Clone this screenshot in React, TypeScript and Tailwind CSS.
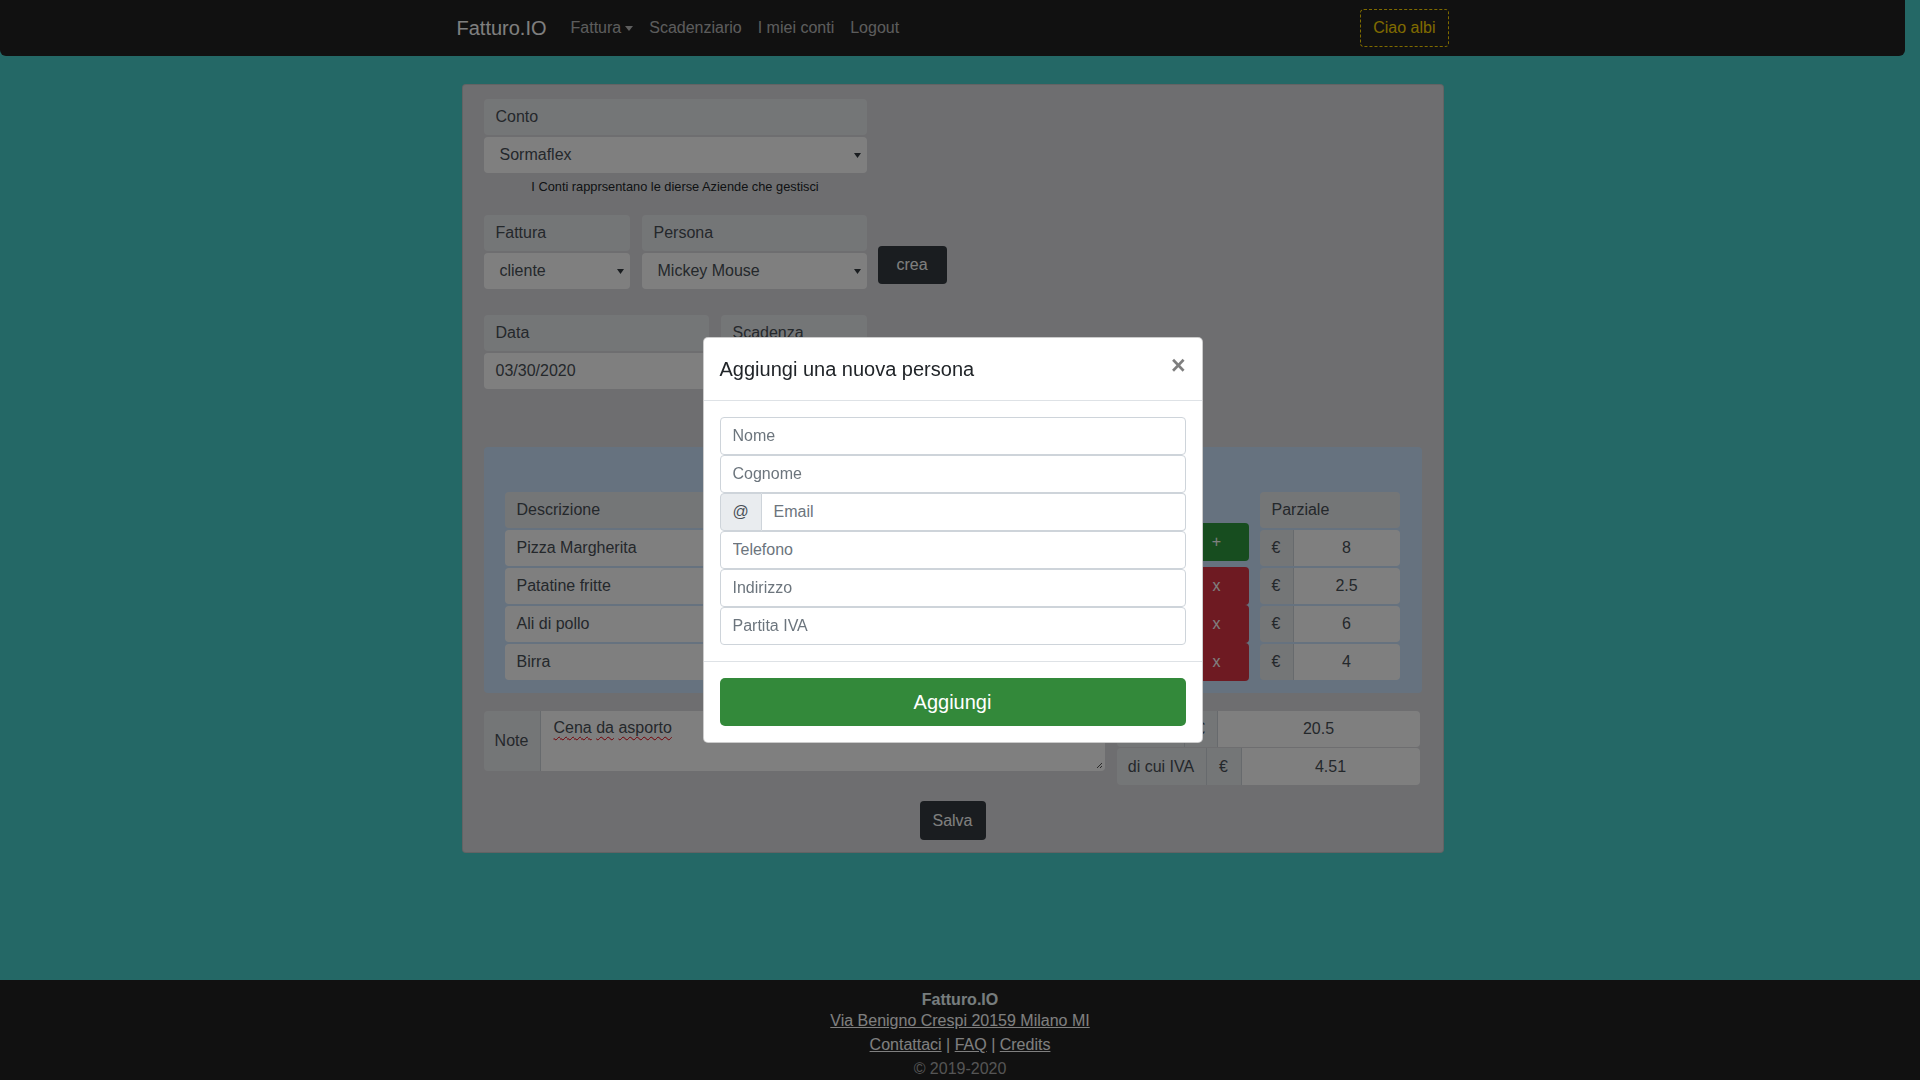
import React from 'react';

const rows = [
  { desc: 'Pizza Margherita', qty: '2', price: '4', iva: '22', parz: '8' },
  { desc: 'Patatine fritte', qty: '1', price: '2.5', iva: '22', parz: '2.5' },
  { desc: 'Ali di pollo', qty: '1', price: '6', iva: '22', parz: '6' },
  { desc: 'Birra', qty: '2', price: '2', iva: '22', parz: '4' },
];

const Caret: React.FC = () => (
  <svg width="7" height="5" viewBox="0 0 7 5" className="shrink-0">
    <path d="M0 0h7L3.5 5z" fill="#343a40" />
  </svg>
);

const Label: React.FC<{ children: React.ReactNode; className?: string }> = ({ children, className = '' }) => (
  <div className={`h-[36px] flex items-center px-3 bg-[#e9ecef] text-[#495057] rounded-[4px] ${className}`}>
    {children}
  </div>
);

const Select: React.FC<{ value: string }> = ({ value }) => (
  <div className="h-[36px] flex items-center justify-between pl-4 pr-[6px] bg-white text-[#495057] rounded-[4px]">
    <span>{value}</span>
    <Caret />
  </div>
);

const Field: React.FC<{ label: string; children: React.ReactNode; className?: string }> = ({ label, children, className = '' }) => (
  <div className={`flex flex-col gap-[2px] ${className}`}>
    <Label>{label}</Label>
    {children}
  </div>
);

const Euro: React.FC<{ value: string }> = ({ value }) => (
  <div className="h-[36px] flex rounded-[4px] overflow-hidden">
    <div className="w-[34px] flex items-center justify-center bg-[#e9ecef] text-[#495057] border-r border-[#ced4da]">€</div>
    <div className="flex-1 flex items-center justify-center bg-white text-[#495057]">{value}</div>
  </div>
);

const inputCls = 'h-[38px] w-full min-w-0 border border-[#ced4da] rounded-[4px] px-3 text-[16px] text-[#495057] placeholder:text-[#6c757d] bg-white outline-none';

export default function App() {
  return (
    <div className="h-screen flex flex-col bg-[#48d1cc] text-[16px] overflow-hidden" style={{ fontFamily: '"Liberation Sans", Arial, sans-serif' }}>
      <div className="w-[1905px]">
        {/* Navbar */}
        <nav className="h-[56px] bg-[#222] rounded-b-[6px] flex items-center">
          <div className="w-[992px] mx-auto flex items-center justify-between">
            <div className="flex items-center">
              <span className="text-[20px] text-white mr-[16px]">Fatturo.IO</span>
              <div className="flex items-center text-white/70">
                <span className="px-2 flex items-center gap-[4px]">
                  Fattura
                  <span className="inline-block border-t-[5px] border-t-current border-x-[4px] border-x-transparent" />
                </span>
                <span className="px-2">Scadenziario</span>
                <span className="px-2">I miei conti</span>
                <span className="px-2">Logout</span>
              </div>
            </div>
            <button className="h-[38px] px-3 border border-dashed border-[#ffd700] text-[#ffd700] rounded-[4px]">Ciao albi</button>
          </div>
        </nav>

        {/* Card */}
        <div className="w-[982px] mx-auto mt-[28px] bg-[#dcdde0] border border-black/10 rounded-[4px] px-[21px] pt-[14px] pb-[12px]">
          <div className="w-[383px]">
            <Field label="Conto">
              <Select value="Sormaflex" />
            </Field>
            <p className="text-[12.8px] leading-[18px] text-[#212529] text-center mt-[5px]">I Conti rapprsentano le dierse Aziende che gestisci</p>
          </div>

          <div className="flex items-end mt-[19px]">
            <Field label="Fattura" className="w-[146px]">
              <Select value="cliente" />
            </Field>
            <Field label="Persona" className="w-[225px] ml-[12px]">
              <Select value="Mickey Mouse" />
            </Field>
            <button className="ml-[11px] mb-[5px] h-[38px] w-[69px] bg-[#343a40] text-white rounded-[4px]">crea</button>
          </div>

          <div className="flex mt-[26px]">
            <Field label="Data" className="w-[225px]">
              <div className="h-[36px] flex items-center px-3 bg-white text-[#495057] rounded-[4px]">03/30/2020</div>
            </Field>
            <Field label="Scadenza" className="w-[146px] ml-[12px]">
              <div className="h-[36px] flex items-center px-3 bg-white text-[#495057] rounded-[4px]">04/30/2020</div>
            </Field>
          </div>

          {/* Invoice rows */}
          <div className="mt-[58px] bg-[#cce5ff] rounded-[4px] pl-[21px] pr-[22px] pt-[45px] pb-[12px] flex">
            <div className="w-[295px] flex flex-col gap-[2px]">
              <Label>Descrizione</Label>
              {rows.map((r) => (
                <div key={r.desc} className="h-[36px] flex items-center px-3 bg-white text-[#495057] rounded-[4px]">{r.desc}</div>
              ))}
            </div>
            <div className="w-[88px] ml-[12px] flex flex-col gap-[2px]">
              <Label>Quantità</Label>
              {rows.map((r) => (
                <div key={r.desc} className="h-[36px] flex items-center justify-center bg-white text-[#495057] rounded-[4px]">{r.qty}</div>
              ))}
            </div>
            <div className="w-[128px] ml-[12px] flex flex-col gap-[2px]">
              <Label>Prezzo</Label>
              {rows.map((r) => (
                <Euro key={r.desc} value={r.price} />
              ))}
            </div>
            <div className="w-[88px] ml-[12px] flex flex-col gap-[2px]">
              <Label>IVA %</Label>
              {rows.map((r) => (
                <div key={r.desc} className="h-[36px] flex items-center justify-center bg-white text-[#495057] rounded-[4px]">{r.iva}</div>
              ))}
            </div>
            <div className="w-[64px] ml-[45px] flex flex-col pt-[31px]">
              <button className="h-[38px] bg-[#2f9a3e] text-white rounded-[4px]">+</button>
              <div className="mt-[6px] flex flex-col">
                {rows.slice(1).map((r) => (
                  <button key={r.desc} className="h-[38px] bg-[#dc3545] text-white rounded-[4px]">x</button>
                ))}
              </div>
            </div>
            <div className="w-[140px] ml-[11px] flex flex-col gap-[2px]">
              <Label>Parziale</Label>
              {rows.map((r) => (
                <Euro key={r.desc} value={r.parz} />
              ))}
            </div>
          </div>

          {/* Note + totals */}
          <div className="flex mt-[18px]">
            <div className="w-[621px] h-[60px] flex rounded-[4px] overflow-hidden">
              <div className="w-[57px] flex items-center justify-center bg-[#e9ecef] text-[#495057] border-r border-[#ced4da]">Note</div>
              <div className="relative flex-1 bg-white text-[#495057] px-[13px] pt-[5px] leading-6">
                <span className="underline decoration-wavy decoration-red-600 decoration-[1px] underline-offset-[3px]">Cena</span>{' '}
                <span className="underline decoration-wavy decoration-red-600 decoration-[1px] underline-offset-[3px]">da</span>{' '}
                <span className="underline decoration-wavy decoration-red-600 decoration-[1px] underline-offset-[3px]">asporto</span>
                <svg width="7" height="7" viewBox="0 0 7 7" className="absolute right-[2px] bottom-[2px]">
                  <path d="M1 6L6 1M4 6L6 4" stroke="#555" strokeWidth="1" />
                </svg>
              </div>
            </div>
            <div className="w-[303px] ml-[12px] flex flex-col gap-[1px]">
              <div className="h-[36px] flex rounded-[4px] overflow-hidden">
                <div className="w-[68px] flex items-center justify-center bg-[#e9ecef] text-[#495057] border-r border-[#ced4da]">Totale</div>
                <div className="w-[33px] flex items-center justify-center bg-[#e9ecef] text-[#495057] border-r border-[#ced4da]">€</div>
                <div className="flex-1 flex items-center justify-center bg-white text-[#495057]">20.5</div>
              </div>
              <div className="h-[37px] flex rounded-[4px] overflow-hidden">
                <div className="w-[90px] flex items-center justify-center bg-[#e9ecef] text-[#495057] border-r border-[#ced4da]">di cui IVA</div>
                <div className="w-[35px] flex items-center justify-center bg-[#e9ecef] text-[#495057] border-r border-[#ced4da]">€</div>
                <div className="flex-1 flex items-center justify-center bg-white text-[#495057]">4.51</div>
              </div>
            </div>
          </div>

          <div className="flex justify-center mt-[16px]">
            <button className="h-[39px] w-[66px] bg-[#343a40] text-white rounded-[4px]">Salva</button>
          </div>
        </div>
      </div>

      {/* Footer */}
      <footer className="mt-auto h-[100px] bg-[#222] flex flex-col items-center pt-[10px]">
        <div className="font-bold leading-[20px] text-[#eefafc]">Fatturo.IO</div>
        <a className="leading-[22px] text-white underline">Via Benigno Crespi 20159 Milano MI</a>
        <div className="leading-6 mt-[1px] text-white">
          <a className="underline">Contattaci</a> | <a className="underline">FAQ</a> | <a className="underline">Credits</a>
        </div>
        <div className="leading-6 text-[#aaa]">© 2019-2020</div>
      </footer>

      {/* Backdrop */}
      <div className="fixed inset-0 bg-black/50 z-40" />

      {/* Modal */}
      <div className="fixed inset-0 z-50 flex items-center justify-center pr-[15px]">
        <div className="w-[500px] bg-white border border-black/20 rounded-[5px]">
          <div className="flex items-start justify-between p-4 border-b border-[#dee2e6]">
            <h5 className="text-[20px] leading-[30px] text-[#212529]">Aggiungi una nuova persona</h5>
            <button className="text-[25px] font-bold leading-[30px] text-black opacity-50 -mt-[4px]">×</button>
          </div>
          <div className="p-4 flex flex-col">
            <input className={inputCls} placeholder="Nome" />
            <input className={inputCls} placeholder="Cognome" />
            <div className="flex h-[38px]">
              <div className="w-[42px] shrink-0 flex items-center justify-center bg-[#e9ecef] border border-[#ced4da] rounded-l-[4px] text-[#495057]">@</div>
              <input className={`${inputCls} rounded-l-none border-l-0`} placeholder="Email" />
            </div>
            <input className={inputCls} placeholder="Telefono" />
            <input className={inputCls} placeholder="Indirizzo" />
            <input className={inputCls} placeholder="Partita IVA" />
          </div>
          <div className="p-4 border-t border-[#dee2e6]">
            <button className="w-full h-[48px] bg-[#33893a] text-white text-[20px] rounded-[5px]">Aggiungi</button>
          </div>
        </div>
      </div>
    </div>
  );
}
